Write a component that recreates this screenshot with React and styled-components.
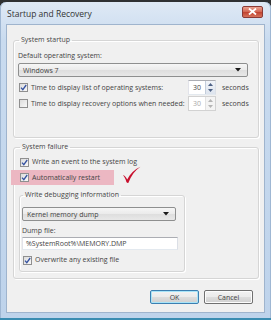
import styled, { createGlobalStyle } from "styled-components"

const GlobalStyle = createGlobalStyle`
  html, body {
    margin: 0;
    padding: 0;
    background: #2f3133;
  }
  body {
    font-family: "Open Sans", "Noto Sans", sans-serif;
    color: #444;
  }
`

export default function App() {
  return (
    <>
      <GlobalStyle />
      <Window>
        <TitleBar>
          <Title>Startup and Recovery</Title>
          <CloseButton>
            <svg width="9" height="7" viewBox="0 0 9 7">
              <path d="M1 0.5 L8 6.5 M8 0.5 L1 6.5" stroke="#fff" strokeWidth="1.8" />
            </svg>
          </CloseButton>
        </TitleBar>

        <Content>
          <Group $pad="6px 8px 26px 4px">
            <Legend>System startup</Legend>
            <Label>Default operating system:</Label>
            <Combo $width="230px" $top="2px">
              <span>Windows 7</span>
              <Arrow />
            </Combo>
            <Row $top="3px">
              <CheckBox checked />
              <RowText>Time to display list of operating systems:</RowText>
              <Spin value="30" />
              <Unit>seconds</Unit>
            </Row>
            <Row $top="1px">
              <CheckBox />
              <RowText>Time to display recovery options when needed:</RowText>
              <Spin value="30" disabled />
              <Unit>seconds</Unit>
            </Row>
          </Group>

          <Group $pad="4px 10px 6px 5px" $top="4px">
            <Legend>System failure</Legend>
            <Row>
              <CheckBox checked />
              <RowText>Write an event to the system log</RowText>
            </Row>
            <Row $top="2px">
              <Highlight>
                <CheckBox checked />
                <RowText>Automatically restart</RowText>
              </Highlight>
              <RedCheck />
            </Row>

            <Group $pad="7px 6px 5px 2px" $top="5px">
              <Legend>Write debugging information</Legend>
              <Combo $width="154px">
                <span>Kernel memory dump</span>
                <Arrow />
              </Combo>
              <Label $top="5px">Dump file:</Label>
              <TextBox>%SystemRoot%\MEMORY.DMP</TextBox>
              <Row $top="4px">
                <CheckBox checked />
                <RowText>Overwrite any existing file</RowText>
              </Row>
            </Group>
          </Group>

          <Buttons>
            <Button $focused>OK</Button>
            <Button>Cancel</Button>
          </Buttons>
        </Content>
      </Window>
    </>
  )
}

function CheckBox({ checked }) {
  return (
    <Box>
      {checked && (
        <svg width="7" height="7" viewBox="0 0 7 7">
          <path d="M1 3.6 L2.8 5.6 L6.2 1" fill="none" stroke="#3552a0" strokeWidth="1.3" />
        </svg>
      )}
    </Box>
  )
}

function Spin({ value, disabled }) {
  return (
    <SpinWrap $disabled={disabled}>
      <SpinValue>{value}</SpinValue>
      <SpinButtons $disabled={disabled}>
        <SpinHalf>
          <svg width="5" height="3" viewBox="0 0 5 3">
            <path d="M0 3 L2.5 0 L5 3 Z" fill={disabled ? "#b5b5b5" : "#4d6185"} />
          </svg>
        </SpinHalf>
        <SpinHalf>
          <svg width="5" height="3" viewBox="0 0 5 3">
            <path d="M0 0 L2.5 3 L5 0 Z" fill={disabled ? "#b5b5b5" : "#4d6185"} />
          </svg>
        </SpinHalf>
      </SpinButtons>
    </SpinWrap>
  )
}

function Arrow() {
  return (
    <svg width="6" height="4" viewBox="0 0 6 4">
      <path d="M0 0 L6 0 L3 3.5 Z" fill="#1a1a1a" />
    </svg>
  )
}

function RedCheck() {
  return (
    <CheckMark width="20" height="18" viewBox="0 0 20 18">
      <path
        d="M1 9 C2.5 9.5 4 11 5.2 13.5 C8 8 12.5 3.5 18.5 0.8 C13 4.5 9 10 6.3 17 C5 17.4 4.2 16 3.8 14 C3 12 2 10.5 1 9 Z"
        fill="#c8102e"
      />
    </CheckMark>
  )
}

const Window = styled.div`
  box-sizing: border-box;
  width: 271px;
  height: 318px;
  margin-top: 2px;
  display: flex;
  flex-direction: column;
  border-radius: 6px 6px 0 0;
  background: linear-gradient(180deg, #dfe9f5 0%, #c9dbef 12%, #bed3eb 100%);
  border-bottom: 2px solid #3a8cb1;
  box-shadow: inset 1px 0 0 #9fb7d3, inset -1px 0 0 #9fb7d3;
`

const TitleBar = styled.div`
  height: 22px;
  display: flex;
  align-items: center;
  justify-content: space-between;
  padding: 0 8px 0 7px;
`

const Title = styled.span`
  font-size: 8.5px;
  color: #333;
`

const CloseButton = styled.div`
  width: 19px;
  height: 10px;
  margin-top: -3px;
  display: flex;
  align-items: center;
  justify-content: center;
  border: 1px solid #8b3a36;
  border-radius: 2px;
  background: linear-gradient(180deg, #e8a08f 0%, #d46a57 45%, #c24532 55%, #d6735c 100%);
`

const Content = styled.div`
  flex: 1;
  margin: 0 6px 5px 6px;
  padding: 10px 5px 0 6px;
  display: flex;
  flex-direction: column;
  background: #f0f0f0;
  border: 1px solid #9fb4cd;
`

const Group = styled.fieldset`
  margin: ${(p) => p.$top || "0"} 0 0 0;
  padding: ${(p) => p.$pad};
  min-width: 0;
  display: flex;
  flex-direction: column;
  align-items: flex-start;
  border: 1px solid #d5d5d5;
  border-radius: 3px;
  box-shadow: inset 1px 1px 0 #fff, 1px 1px 0 #fff;
`

const Legend = styled.legend`
  padding: 0 2px;
  margin-left: 1px;
  font-size: 7px;
  line-height: 10px;
  color: #444;
`

const Label = styled.div`
  margin-top: ${(p) => p.$top || "0"};
  font-size: 7px;
  line-height: 10px;
  color: #444;
`

const Combo = styled.div`
  box-sizing: border-box;
  width: ${(p) => p.$width};
  height: 14px;
  margin-top: ${(p) => p.$top || "0"};
  padding: 0 6px 0 4px;
  display: flex;
  align-items: center;
  justify-content: space-between;
  font-size: 7px;
  color: #444;
  border: 1px solid #8e8f8f;
  border-radius: 2px;
  background: linear-gradient(180deg, #f6f6f6 0%, #ebebeb 48%, #dedede 52%, #e8e8e8 100%);
`

const Row = styled.div`
  align-self: stretch;
  margin-top: ${(p) => p.$top || "0"};
  display: flex;
  align-items: center;
  min-height: 12px;
`

const Box = styled.div`
  box-sizing: border-box;
  width: 9px;
  height: 9px;
  margin: 0 3px 0 1px;
  flex: none;
  display: flex;
  align-items: center;
  justify-content: center;
  border: 1px solid #8f8f8f;
  background: linear-gradient(135deg, #dcdcdc 0%, #f8f8f8 100%);
`

const RowText = styled.span`
  flex: 1;
  font-size: 7px;
  line-height: 10px;
  white-space: nowrap;
  color: #444;
`

const SpinWrap = styled.div`
  box-sizing: border-box;
  width: 28px;
  height: 15px;
  flex: none;
  display: flex;
  align-items: stretch;
  border: 1px solid #abadb3;
  border-color: ${(p) => (p.$disabled ? "#d2d2d2" : "#abadb3 #dbdfe6 #e3e9ef #e2e3ea")};
  background: #fff;
  color: ${(p) => (p.$disabled ? "#a8a8a8" : "#444")};
`

const SpinValue = styled.span`
  flex: 1;
  padding-left: 4px;
  font-size: 7px;
  line-height: 13px;
`

const SpinButtons = styled.div`
  width: 9px;
  display: flex;
  flex-direction: column;
  border-left: 1px solid ${(p) => (p.$disabled ? "#e2e2e2" : "#c3cddb")};
  background: ${(p) =>
    p.$disabled ? "#f4f4f4" : "linear-gradient(180deg, #f1f4f9 0%, #dde4ee 100%)"};
`

const SpinHalf = styled.div`
  flex: 1;
  display: flex;
  align-items: center;
  justify-content: center;
`

const Unit = styled.span`
  width: 28px;
  margin-left: 6px;
  font-size: 7px;
  color: #444;
`

const Highlight = styled.div`
  width: 103px;
  height: 15px;
  margin-left: -8px;
  padding-left: 8px;
  box-sizing: border-box;
  display: flex;
  align-items: center;
  background: #ecb7c2;
`

const CheckMark = styled.svg`
  margin: -6px 0 0 8px;
`

const TextBox = styled.div`
  box-sizing: border-box;
  width: 156px;
  height: 13px;
  margin-top: 1px;
  padding-left: 3px;
  font-size: 7px;
  line-height: 11px;
  color: #444;
  background: #fff;
  border: 1px solid;
  border-color: #abadb3 #dbdfe6 #e3e9ef #e2e3ea;
`

const Buttons = styled.div`
  margin-top: 11px;
  padding-right: 6px;
  display: flex;
  justify-content: flex-end;
  gap: 5px;
`

const Button = styled.div`
  box-sizing: border-box;
  width: 49px;
  height: 14px;
  display: flex;
  align-items: center;
  justify-content: center;
  font-size: 7px;
  color: #444;
  border: 1px solid ${(p) => (p.$focused ? "#3c7fb1" : "#707070")};
  border-radius: 2px;
  background: linear-gradient(180deg, #f2f2f2 0%, #ebebeb 48%, #dddddd 52%, #cfcfcf 100%);
  box-shadow: ${(p) => (p.$focused ? "inset 0 0 0 1px #a8e4f8" : "inset 0 0 0 1px #fcfcfc")};
`
